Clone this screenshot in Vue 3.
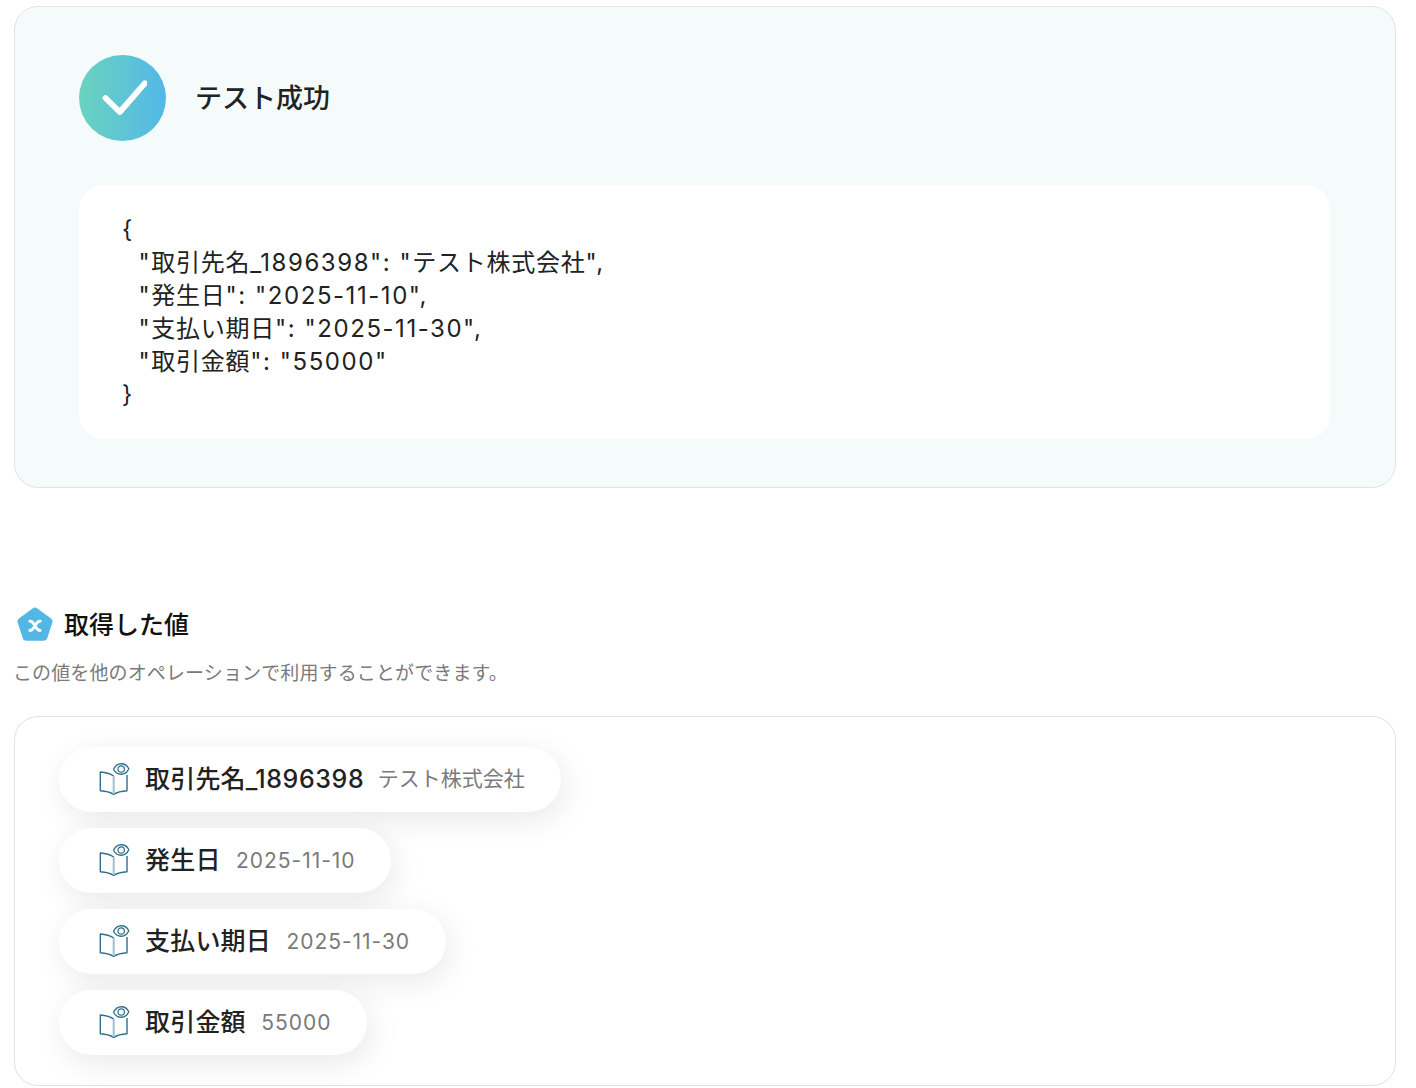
<script setup>
const code = [
  '{',
  '  "取引先名_1896398": "テスト株式会社",',
  '  "発生日": "2025-11-10",',
  '  "支払い期日": "2025-11-30",',
  '  "取引金額": "55000"',
  '}'
]
const items = [
  { label: '取引先名_1896398', value: 'テスト株式会社' },
  { label: '発生日', value: '2025-11-10' },
  { label: '支払い期日', value: '2025-11-30' },
  { label: '取引金額', value: '55000' }
]
const parts = (text) =>
  text
    .split(/([\u3000-\u9fff\uff00-\uffef]+)/)
    .filter(Boolean)
    .map((t) => ({ t, cjk: /^[\u3000-\u9fff\uff00-\uffef]/.test(t) }))
</script>

<template>
  <div class="page">
    <section class="result">
      <div class="result-head">
        <div class="check">
          <svg width="48" height="40" viewBox="0 0 48 40" fill="none">
            <path d="M6.500 20 L20.800 34 L45.800 5.300" stroke="#fff" stroke-width="5.800" stroke-linecap="round" stroke-linejoin="round" />
          </svg>
        </div>
        <h2>テスト成功</h2>
      </div>
      <div class="code">
        <div v-for="(line, n) in code" :key="n" class="line"><span v-for="(p, i) in parts(line)" :key="i" :class="p.cjk ? 'cjk' : 'lat'">{{ p.t }}</span></div>
      </div>
    </section>

    <div class="values-title">
      <svg class="penta" width="36" height="36" viewBox="0 0 36 36">
        <path d="M15.600 1.500 a4 4 0 0 1 4.800 0 L33.800 11.200 a4 4 0 0 1 1.500 4.500 L30.300 31 a4 4 0 0 1 -3.800 2.800 H9.500 a4 4 0 0 1 -3.800 -2.800 L0.700 15.700 a4 4 0 0 1 1.500 -4.500 Z" fill="#53b7e5" />
        <path d="M12.800 14.200 C15.500 14.200 16 15.500 18 18.800 C20 22 20.500 23.500 23.200 23.500 M23.200 14.200 C20.500 14.200 20 15.500 18 18.800 C16 22 15.500 23.500 12.800 23.500" fill="none" stroke="#fff" stroke-width="2.800" stroke-linecap="round" />
      </svg>
      <h3>取得した値</h3>
    </div>
    <p class="note">この値を他のオペレーションで利用することができます。</p>

    <section class="values">
      <div v-for="item in items" :key="item.label" class="pill">
        <svg class="book" width="32" height="34" viewBox="0 0 32 34" fill="none">
          <path d="M14.700 14 C11 11.500 6.500 10.300 1.300 10 V28.700 C6.500 29 11 30 14.700 32.300 C18.400 30 23 29 28 28.700 V13" stroke="#2f6f8f" stroke-width="1.400" stroke-linejoin="round" />
          <path d="M14.700 14 V32" stroke="#9dc0cf" stroke-width="2" />
          <path d="M14.500 7.300 C18 0 26.500 0 29.800 6.700 C26.500 14 18 14 14.500 7.300 Z" stroke="#2f6f8f" stroke-width="1.300" fill="#fff" />
          <circle cx="22.200" cy="7" r="3.200" stroke="#2f6f8f" stroke-width="1.200" />
        </svg>
        <span class="label"><span v-for="(p, i) in parts(item.label)" :key="i" :class="p.cjk ? 'cjk' : 'lat'">{{ p.t }}</span></span>
        <span class="value"><span v-for="(p, i) in parts(item.value)" :key="i" :class="p.cjk ? 'cjk' : 'lat'">{{ p.t }}</span></span>
      </div>
    </section>
  </div>
</template>

<style>
html, body { margin: 0; background: #fff; }
</style>

<style scoped>
.page {
  box-sizing: border-box;
  width: 1416px;
  height: 1088px;
  overflow: hidden;
  padding: 6px 20px 0 14px;
  font-family: Inter, "Noto Sans CJK JP", sans-serif;
  color: #222;
}
.result {
  box-sizing: border-box;
  height: 482px;
  padding: 48px 65px 48px 64px;
  background: #f5fbfb;
  border: 1px solid #e0e4e4;
  border-radius: 24px;
}
.result-head {
  display: flex;
  align-items: flex-start;
  gap: 29px;
  height: 87px;
}
.check {
  width: 87px;
  height: 86px;
  border-radius: 50%;
  background: linear-gradient(90deg, #6bd3bf, #53b7e8);
  display: flex;
  align-items: center;
  justify-content: center;
}
h2 {
  margin: 0;
  align-self: center;
  padding-bottom: 5px;
  font-size: 27px;
  font-weight: 500;
}
.code {
  box-sizing: border-box;
  height: 254px;
  margin: 43px 0 0;
  padding: 28px 43px;
  background: #fff;
  border-radius: 24px;
  font-size: 24px;
  line-height: 33px;
  color: #222;
}
.line { white-space: pre; height: 33px; }
.code .cjk { letter-spacing: 0.75px; }
.code .lat { letter-spacing: 1.55px; }
.values-title {
  display: flex;
  align-items: center;
  gap: 11px;
  margin: 118px 0 0 3px;
  height: 38px;
}
h3 {
  margin: 0;
  padding-bottom: 4px;
  font-size: 25px;
  font-weight: 500;
  color: #111;
}
.note {
  margin: 15px 0 0 -1px;
  font-size: 19px;
  line-height: 30px;
  letter-spacing: 0.12px;
  color: #7a7a7a;
}
.values {
  box-sizing: border-box;
  height: 370px;
  margin-top: 27px;
  padding: 30px 44px;
  border: 1px solid #e0e2e2;
  border-radius: 24px;
  display: flex;
  flex-direction: column;
  align-items: flex-start;
  gap: 16.500px;
}
.pill {
  box-sizing: border-box;
  height: 64.500px;
  padding: 0 36px 0 40px;
  display: flex;
  align-items: center;
  background: #fff;
  border-radius: 33px;
  box-shadow: 4px 8px 32px rgba(0, 0, 0, 0.09);
}
.book {
  margin-right: 14px;
  flex: none;
}
.label {
  padding-bottom: 4px;
  font-size: 25px;
  font-weight: 500;
  color: #222;
}
.label .cjk { letter-spacing: 0.2px; }
.label .lat { letter-spacing: 0.6px; }
.value {
  margin-left: 15.500px;
  font-size: 21px;
  color: #7a7a7a;
}
.value .cjk { display: block; margin: 0 0 4px -2px; }
.value .lat { letter-spacing: 0.95px; }
</style>
